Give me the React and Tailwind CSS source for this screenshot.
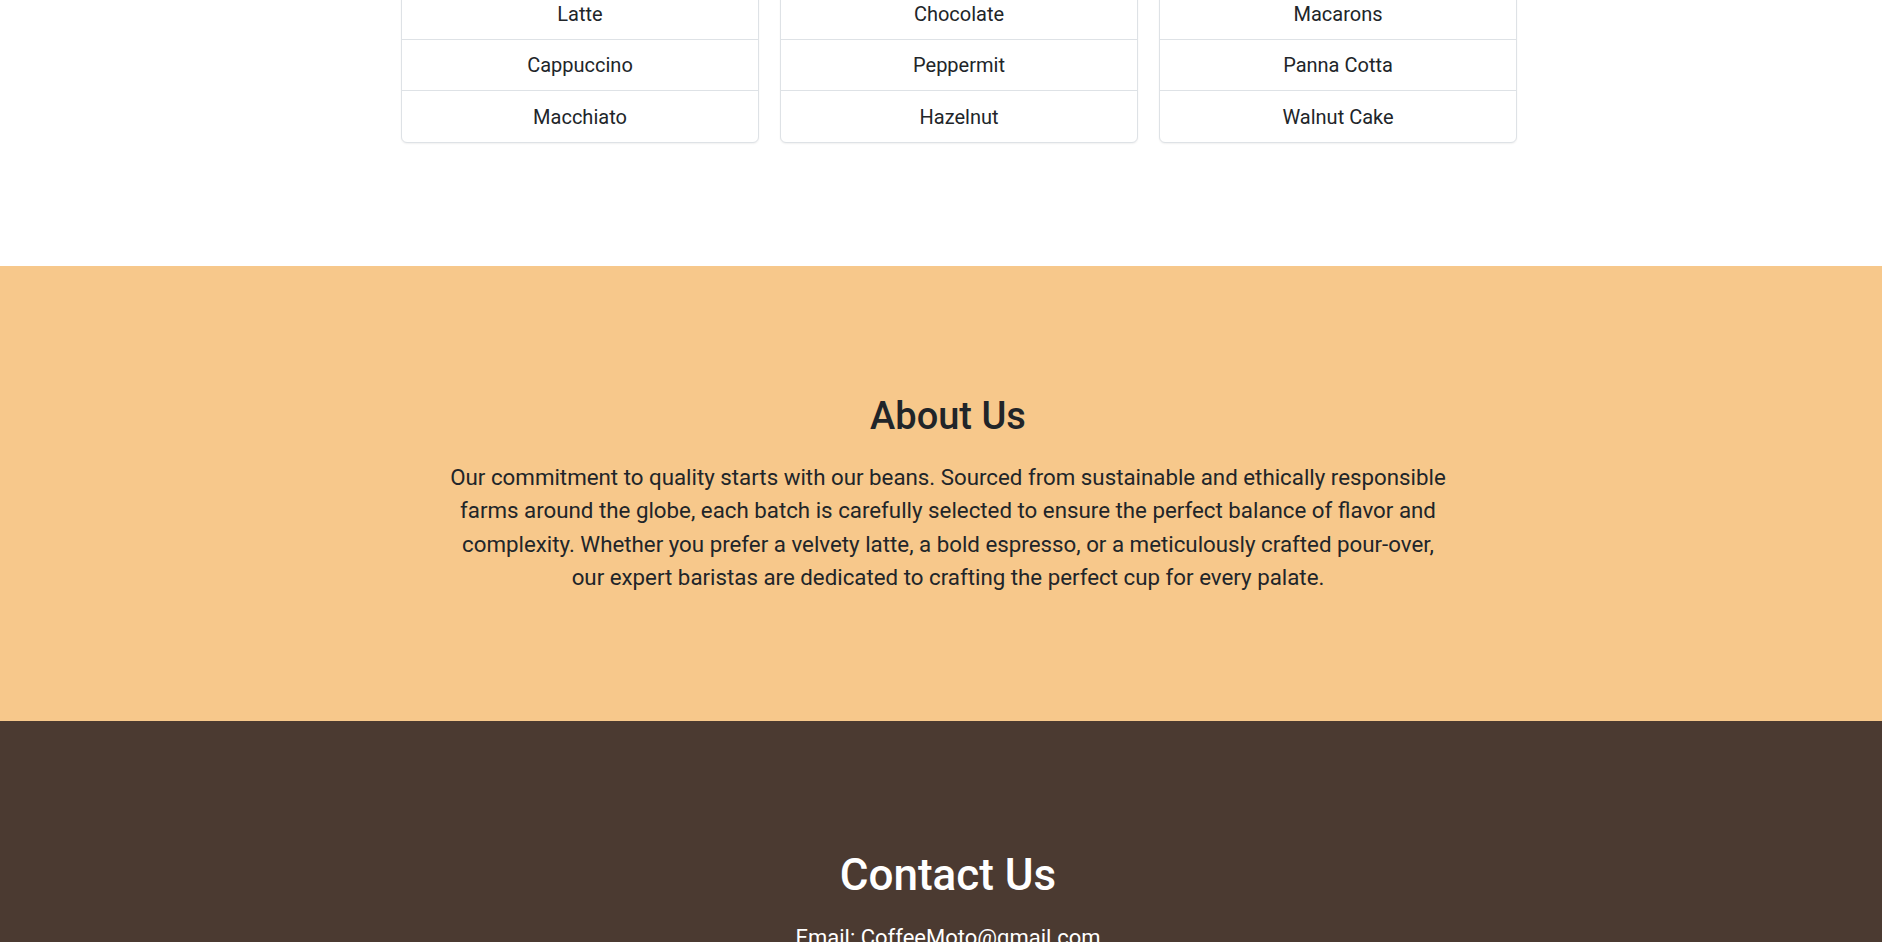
import React from 'react';

const menu = [
  ['Latte', 'Cappuccino', 'Macchiato'],
  ['Chocolate', 'Peppermit', 'Hazelnut'],
  ['Macarons', 'Panna Cotta', 'Walnut Cake'],
];

const MenuCard = ({ items }) => (
  <div className="w-[358px] bg-white border border-[#dee2e6] rounded-b-md shadow-[0_1px_2px_rgba(0,0,0,0.06)]">
    <ul>
      {items.map((item, index) => (
        <li
          key={item}
          className={`h-[51px] flex items-center justify-center text-[20px] text-[#212529] ${index < items.length - 1 ? 'border-b border-[#dee2e6]' : ''}`}
        >
          {item}
        </li>
      ))}
    </ul>
  </div>
);

const App = () => {
  return (
    <main className="min-h-screen bg-white font-['Roboto','Liberation_Sans',sans-serif] text-[#212529] overflow-hidden">
      {/* menu list (scrolled, top cut off) */}
      <section className="-mt-[12px] pb-[123px] flex justify-center gap-[21px] pl-[36px]">
        {menu.map((items, i) => (
          <MenuCard key={i} items={items} />
        ))}
      </section>

      {/* about */}
      <section className="bg-[#f7c88b] h-[455px] pt-[128px] flex flex-col items-center pl-[14px]">
        <h2 className="text-[38px] font-medium leading-[1.2] mb-[21px]">About Us</h2>
        <p className="max-w-[1060px] text-center text-[22.3px] leading-[33.6px]">
          Our commitment to quality starts with our beans. Sourced from sustainable and ethically responsible<br />
          farms around the globe, each batch is carefully selected to ensure the perfect balance of flavor and<br />
          complexity. Whether you prefer a velvety latte, a bold espresso, or a meticulously crafted pour-over,<br />
          our expert baristas are dedicated to crafting the perfect cup for every palate.
        </p>
      </section>

      {/* contact */}
      <section className="bg-[#4b3a31] pt-[128px] pb-32 flex flex-col items-center text-white pl-[14px]">
        <h2 className="text-[44px] font-medium leading-[1.2] mb-[21px]">Contact Us</h2>
        <p className="text-[22px] leading-[30px]">Email: CoffeeMoto@gmail.com</p>
      </section>
    </main>
  );
};

export default App;
